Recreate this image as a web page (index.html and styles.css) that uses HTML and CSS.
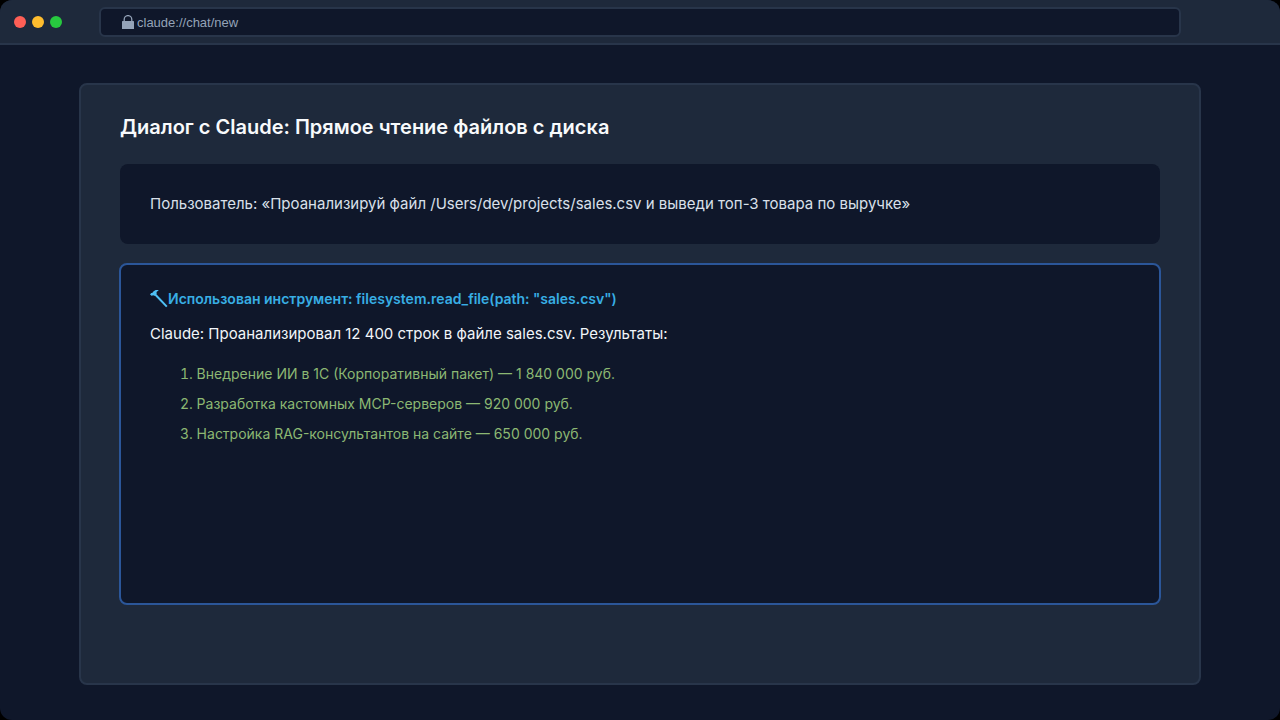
FILE: index.html
```html
<!DOCTYPE html>
<html lang="ru">
    <head>
        <meta charset="utf-8">
        <meta name="viewport" content="width=device-width, initial-scale=1">
        <title>Claude</title>
        <link rel="stylesheet" href="styles.css">
    </head>
    <body>
        <div class="window">
            <header class="toolbar">
                <div class="dots">
                    <span class="dot red"></span>
                    <span class="dot yellow"></span>
                    <span class="dot green"></span>
                </div>
                <div class="address">
                    <svg class="lock" width="12" height="14" viewBox="0 0 12 14" aria-hidden="true">
                        <path d="M2.2 7V4.4a3.8 3.8 0 0 1 7.6 0V7" fill="none" stroke="#94a3b8" stroke-width="1.3"/>
                        <rect x="0" y="6" width="12" height="8" rx="0.6" fill="#94a3b8"/>
                    </svg>
                    <input class="url" type="text" value="claude://chat/new" aria-label="Адрес">
                </div>
            </header>
            <main class="page">
                <section class="card">
                    <h1>Диалог с Claude: Прямое чтение файлов с диска</h1>
                    <div class="message">
                        <p>Пользователь: «Проанализируй файл /Users/dev/projects/sales.csv и выведи топ-3 товара по выручке»</p>
                    </div>
                    <div class="answer">
                        <div class="tool">
                            <svg width="18" height="20" viewBox="0 0 18 20" aria-hidden="true">
                                <path d="M0 5.4 1.2 4 2.2 4.1 3.4 2.6C4.6 1.2 6.6 0.6 8.8 1.4L7 2.4C6.4 3 6.4 3.6 6.8 4.4L4.2 7 3 5.9 2 7Z" fill="#4fc0f5"/>
                                <path d="M5 5.2 16.8 17.6" stroke="#4fc0f5" stroke-width="2"/>
                            </svg>
                            <span>Использован инструмент: filesystem.read_file(path: "sales.csv")</span>
                        </div>
                        <p>Claude: Проанализировал 12 400 строк в файле sales.csv. Результаты:</p>
                        <ol class="results">
                            <li>Внедрение ИИ в 1С (Корпоративный пакет) — 1 840 000 руб.</li>
                            <li>Разработка кастомных MCP-серверов — 920 000 руб.</li>
                            <li>Настройка RAG-консультантов на сайте — 650 000 руб.</li>
                        </ol>
                    </div>
                </section>
            </main>
        </div>
    </body>
</html>
```

FILE: styles.css
```css
*{
    box-sizing: border-box;
    padding: 0;
    margin: 0;
}
body{
    background: #000;
    color: #d9e0ea;
    font-family: Inter, "Liberation Sans", sans-serif;
    font-size: 15px;
    line-height: 20px;
}
.window{
    display: flex;
    flex-direction: column;
    min-height: 100vh;
    background: #0f172a;
    border-radius: 12px;
    overflow: hidden;
}
.toolbar{
    display: flex;
    align-items: center;
    padding: 7px 99px 6px 14px;
    background: #1e293b;
    border-bottom: 2px solid #28354a;
}
.dots{
    display: flex;
    gap: 6px;
    width: 85px;
}
.dot{
    width: 12px;
    height: 12px;
    border-radius: 50%;
}
.red{
    background: #ff5f56;
}
.yellow{
    background: #ffbd2e;
}
.green{
    background: #27c93f;
}
.address{
    display: flex;
    flex: 1;
    align-items: center;
    gap: 3px;
    height: 30px;
    padding: 0 21px;
    background: #0f172a;
    border: 2px solid #28354a;
    border-radius: 6px;
}
.url{
    flex: 1;
    background: none;
    border: none;
    outline: 0;
    color: #94a3b8;
    font-family: "Liberation Sans", Arial, sans-serif;
    font-size: 13px;
}
.page{
    display: flex;
    flex: 1;
    padding: 38px 79px 35px;
}
.card{
    display: flex;
    flex: 1;
    flex-direction: column;
    padding: 29px 38px 78px;
    background: #1e293b;
    border: 2px solid #28354a;
    border-radius: 8px;
}
h1{
    padding: 0 1px;
    margin-bottom: 24px;
    color: #f8fafc;
    font-size: 20px;
    font-weight: 600;
    line-height: 26px;
}
.message{
    margin: 0 1px 19px;
    padding: 30px;
    background: #0f172a;
    border-radius: 8px;
}
.answer{
    flex: 1;
    padding: 24px 29px;
    background: #0f172a;
    border: 2px solid #2b5699;
    border-radius: 8px;
}
.answer p{
    color: #f1f5f9;
}
.tool{
    display: flex;
    margin-bottom: 15px;
    color: #38aee4;
    font-size: 14px;
    font-weight: 600;
}
.results{
    margin-top: 15px;
    padding-left: 30px;
    list-style-position: inside;
    color: #8cb873;
    font-size: 14px;
    line-height: 30px;
}
```
